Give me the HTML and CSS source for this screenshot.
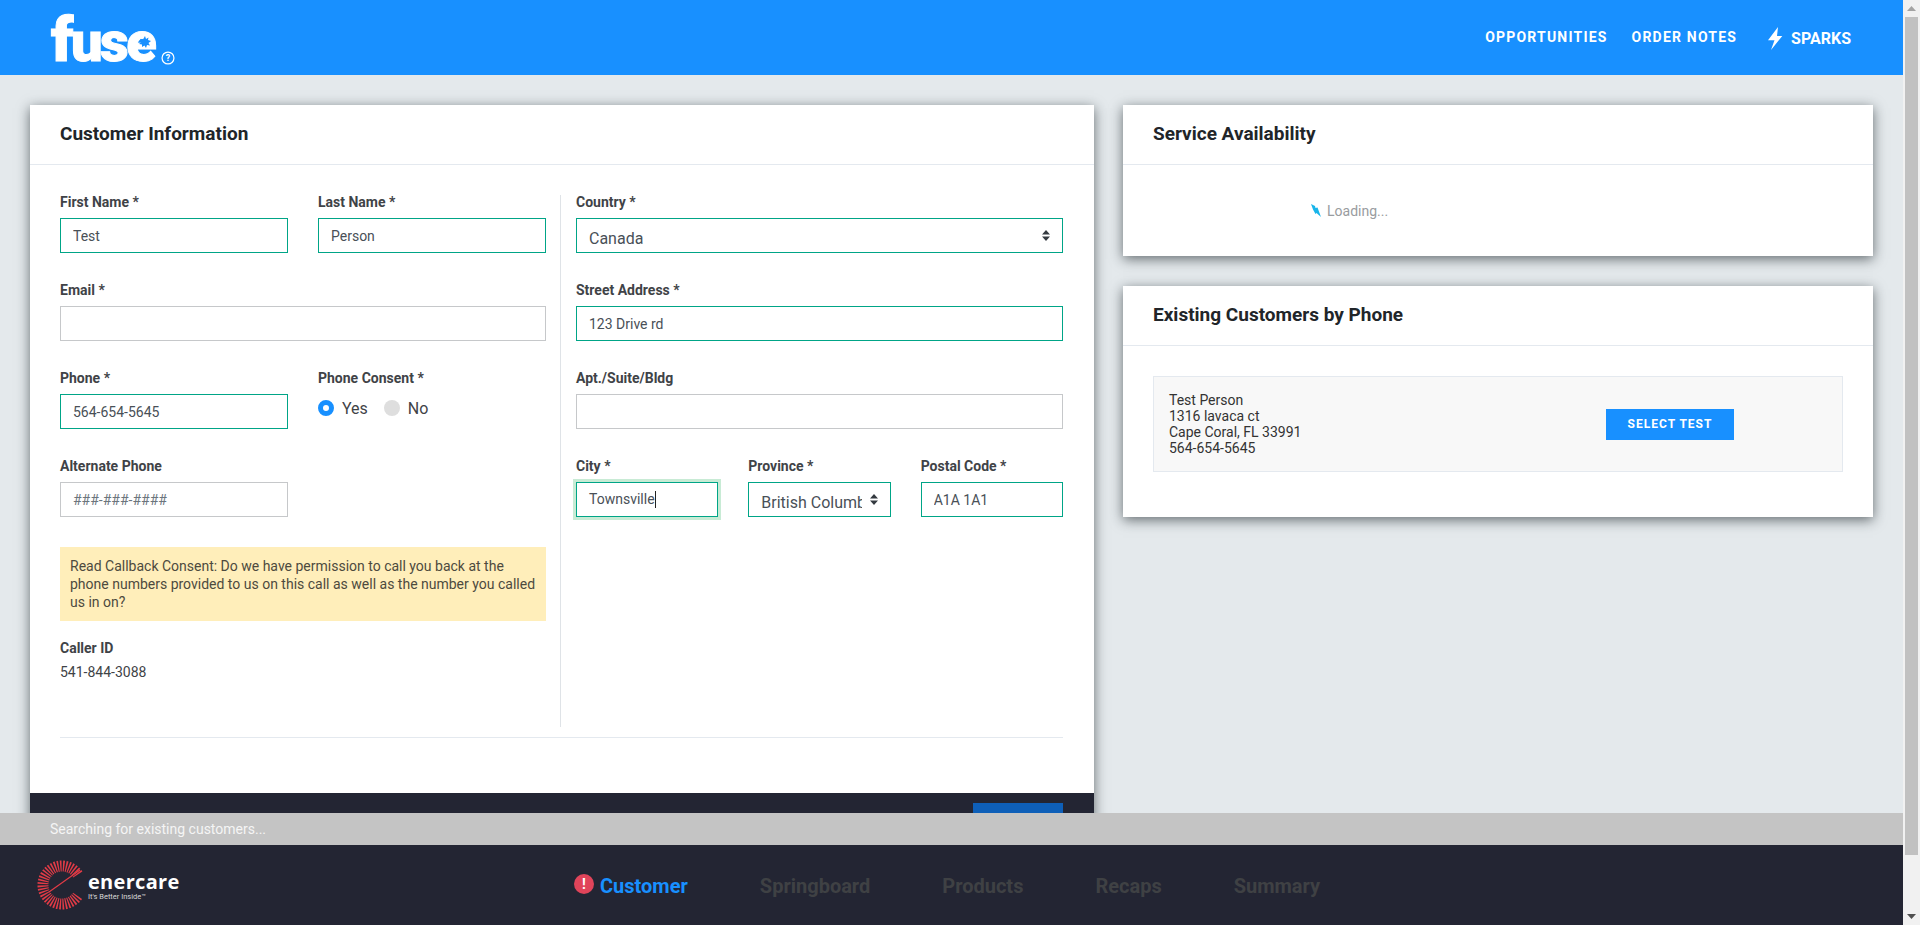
FILE: index.html
```html
<!DOCTYPE html>
<html lang="en">
<head>
  <meta charset="utf-8">
  <title>Fuse - Customer Information</title>
  <link rel="stylesheet" href="styles.css">
</head>
<body>
  <div class="page">
    <div class="page-main">
      <header class="top-bar">
        <div class="logo">
          <span class="logo-word"><span class="logo-f">f</span>use</span>
          <svg class="logo-spark" viewBox="0 0 12 12" width="12" height="12">
            <polygon points="6,0 7,3 9.500,1.500 9,4 12,5 9.500,7 11,9.500 8,9 7,12 5.500,9.500 3,11 3,8.500 0,8 2.500,6 1,3 4,3.500" fill="#1890ff"/>
          </svg>
          <svg class="logo-help" viewBox="0 0 16 16" width="14" height="14">
            <circle cx="8" cy="8" r="6.800" fill="none" stroke="#fff" stroke-width="1.400"/>
            <text x="8" y="11.800" text-anchor="middle" class="logo-help-mark">?</text>
          </svg>
        </div>
        <nav class="top-nav">
          <a class="top-link">OPPORTUNITIES</a>
          <a class="top-link">ORDER NOTES</a>
          <a class="top-link sparks">
            <svg viewBox="0 0 15 23" width="15" height="23"><path d="M10 0 L0 13.300 L6.500 13.300 L3 23 L14.300 9 L9 9 Z" fill="#fff"/></svg>
            <span>SPARKS</span>
          </a>
        </nav>
      </header>

      <main class="content">
        <section class="card card-customer">
          <h2 class="card-title">Customer Information</h2>
          <div class="card-body">
            <div class="form-columns">
              <div class="col-left">
                <div class="row-two">
                  <div class="field">
                    <label>First Name *</label>
                    <input class="input valid" type="text" value="Test">
                  </div>
                  <div class="field">
                    <label>Last Name *</label>
                    <input class="input valid" type="text" value="Person">
                  </div>
                </div>
                <div class="field">
                  <label>Email *</label>
                  <input class="input" type="text">
                </div>
                <div class="row-two">
                  <div class="field">
                    <label>Phone *</label>
                    <input class="input valid" type="text" value="564-654-5645">
                  </div>
                  <div class="field">
                    <label>Phone Consent *</label>
                    <div class="radios">
                      <span class="radio radio-on"></span><span class="radio-text">Yes</span>
                      <span class="radio"></span><span class="radio-text">No</span>
                    </div>
                  </div>
                </div>
                <div class="row-two">
                  <div class="field">
                    <label>Alternate Phone</label>
                    <input class="input" type="text" placeholder="###-###-####">
                  </div>
                </div>
                <div class="consent-note">Read Callback Consent: Do we have permission to call you back at the phone numbers provided to us on this call as well as the number you called us in on?</div>
                <div class="caller">
                  <label>Caller ID</label>
                  <div class="caller-num">541-844-3088</div>
                </div>
              </div>
              <div class="col-right">
                <div class="field">
                  <label>Country *</label>
                  <select class="input select valid"><option>Canada</option></select>
                </div>
                <div class="field">
                  <label>Street Address *</label>
                  <input class="input valid" type="text" value="123 Drive rd">
                </div>
                <div class="field">
                  <label>Apt./Suite/Bldg</label>
                  <input class="input" type="text">
                </div>
                <div class="row-three">
                  <div class="field">
                    <label>City *</label>
                    <div class="input valid focused">Townsville<span class="caret"></span></div>
                  </div>
                  <div class="field">
                    <label>Province *</label>
                    <select class="input select valid"><option>British Columbia</option></select>
                  </div>
                  <div class="field">
                    <label>Postal Code *</label>
                    <input class="input valid" type="text" value="A1A 1A1">
                  </div>
                </div>
              </div>
            </div>
            <hr class="form-rule">
          </div>
          <div class="card-actions"><button class="next-btn"></button></div>
        </section>

        <div class="side">
          <section class="card">
            <h2 class="card-title">Service Availability</h2>
            <div class="loading">
              <svg viewBox="0 0 10 13" width="10" height="13"><path d="M0 0 L4 2 L4.500 4 L6.500 3.500 L10 13 L5.500 9 L4.500 10 L2 5.500 Z" fill="#19b5ea"/></svg>
              <span>Loading...</span>
            </div>
          </section>
          <section class="card">
            <h2 class="card-title">Existing Customers by Phone</h2>
            <div class="card-body-side">
              <div class="match">
                <div class="match-info">Test Person<br>1316 lavaca ct<br>Cape Coral, FL 33991<br>564-654-5645</div>
                <button class="select-btn">SELECT TEST</button>
              </div>
            </div>
          </section>
        </div>
      </main>

      <footer class="bottom">
        <div class="status-bar">Searching for existing customers...</div>
        <div class="steps-bar">
          <div class="brand">
            <svg viewBox="0 0 50 50" width="50" height="50">
              <path d="M41.800 14.500 A19 19 0 1 0 41.800 35.500" fill="none" stroke="#e23b46" stroke-width="11" stroke-dasharray="1.400 1.300"/>
              <line x1="13" y1="32" x2="44" y2="10" stroke="#e23b46" stroke-width="1.200"/>
            </svg>
            <div class="brand-text">
              <span class="brand-name">enercare</span>
              <span class="brand-tag">It's Better Inside™</span>
            </div>
          </div>
          <nav class="steps">
            <span class="step step-active"><span class="step-alert">!</span>Customer</span>
            <span class="step">Springboard</span>
            <span class="step">Products</span>
            <span class="step">Recaps</span>
            <span class="step">Summary</span>
          </nav>
        </div>
      </footer>
    </div>

    <div class="scrollbar">
      <svg class="scroll-arrow" viewBox="0 0 9 5" width="9" height="5"><path d="M4.500 0 L9 5 H0 Z" fill="#a3a3a3"/></svg>
      <div class="scroll-thumb"></div>
      <svg class="scroll-arrow scroll-arrow-down" viewBox="0 0 9 5" width="9" height="5"><path d="M0 0 H9 L4.500 5 Z" fill="#505050"/></svg>
    </div>
  </div>
</body>
</html>
```

FILE: styles.css
```css
html, body {
  margin: 0;
  height: 100%;
  overflow: hidden;
}

body {
  font-family: Roboto, "Liberation Sans", sans-serif;
  font-size: 14px;
  color: #3f4347;
  background: #e4e9ec;
}

.page {
  height: 925px;
  display: flex;
}

.page-main {
  flex: 1;
  min-width: 0;
  position: relative;
  overflow: hidden;
}

.scrollbar {
  width: 17px;
  flex: none;
  background: #f1f1f1;
  position: relative;
}

.scroll-arrow {
  display: block;
  margin: 6px auto 0;
  height: 5px;
}

.scroll-thumb {
  height: 838px;
  margin: 0 2px 0 2px;
  margin-top: 6px;
  background: #c1c1c1;
}

.scroll-arrow-down {
  margin-top: 59px;
}

/* top bar */
.top-bar {
  height: 75px;
  background: #1890ff;
  display: flex;
  justify-content: space-between;
  padding: 0 52px 0 51px;
}

.logo {
  display: flex;
  align-items: flex-end;
  padding-bottom: 10px;
  color: #fff;
  position: relative;
}

.logo-word {
  font-family: Roboto, sans-serif;
  font-weight: 900;
  font-size: 56px;
  line-height: 46px;
  letter-spacing: -2.500px;
  -webkit-text-stroke: 1px #fff;
}

.logo-f {
  font-size: 62px;
  line-height: 46px;
}

.logo-spark {
  position: absolute;
  left: 88px;
  top: 36px;
}

.logo-help {
  margin: 0 0 0 7px;
}

.logo-help-mark {
  font-size: 10px;
  font-weight: 700;
  fill: #fff;
}

.top-nav {
  display: flex;
  align-items: center;
  gap: 24px;
  padding-bottom: 2px;
}

.top-link {
  color: #fff;
  font-size: 14px;
  font-weight: 700;
  letter-spacing: 1.200px;
}

.sparks {
  display: flex;
  align-items: center;
  gap: 8px;
  margin-left: 7px;
  font-size: 16px;
  letter-spacing: 0;
  padding-top: 4px;
}

/* main layout */
.content {
  display: flex;
  align-items: flex-start;
  gap: 29px;
  padding: 30px 30px 0;
}

.card {
  background: #fff;
  box-shadow: 0 3px 12px rgba(30, 40, 45, .65);
}

.card-customer {
  width: 1064px;
  flex: none;
}

.side {
  width: 750px;
  flex: none;
  display: flex;
  flex-direction: column;
  gap: 30px;
}

.card-title {
  margin: 0;
  height: 60px;
  line-height: 58px;
  padding: 0 30px;
  box-sizing: border-box;
  font-size: 19px;
  font-weight: 700;
  color: #212529;
  border-bottom: 1px solid #e4e9ef;
}

.card-body {
  padding: 30px 31px 0 30px;
}

.form-columns {
  display: flex;
}

.col-left {
  width: 486px;
  height: 532px;
  padding-right: 14px;
  border-right: 1px solid #dfe3e7;
  flex: none;
}

.col-right {
  flex: 1;
  padding-left: 15px;
}

.row-two {
  display: grid;
  grid-template-columns: 228px 228px;
  gap: 30px;
}

.row-three {
  display: grid;
  grid-template-columns: 1fr 1fr 1fr;
  gap: 30px;
}

.field {
  margin-bottom: 30px;
}

label {
  display: block;
  font-weight: 700;
  font-size: 14px;
  line-height: 14px;
  margin-bottom: 9px;
  color: #3f4347;
}

.input {
  display: block;
  width: 100%;
  height: 35px;
  box-sizing: border-box;
  border: 1px solid #c6c8ca;
  border-radius: 0;
  background: #fff;
  padding: 0 12px;
  font-family: Roboto, "Liberation Sans", sans-serif;
  font-size: 14px;
  line-height: 33px;
  color: #495057;
  outline: none;
}

.input::placeholder {
  color: #6c757d;
  opacity: 1;
}

.valid {
  border-color: #00a587;
}

.focused {
  box-shadow: 0 0 0 3px #c8ebd5;
}

.caret {
  display: inline-block;
  width: 1px;
  height: 17px;
  background: #222;
  vertical-align: -4px;
}

.select {
  appearance: none;
  font-size: 16px;
  padding-top: 3px;
  padding-right: 28px;
  background-image: url("data:image/svg+xml,%3csvg xmlns='http://www.w3.org/2000/svg' width='8' height='11' viewBox='0 0 8 11'%3e%3cpath fill='%23343a40' d='M4 0 L8 4.500 H0 Z M4 11 L0 6.500 H8 Z'/%3e%3c/svg%3e");
  background-repeat: no-repeat;
  background-position: right 12px center;
}

.radios {
  display: flex;
  align-items: center;
  height: 16px;
  margin-top: 15px;
  font-size: 16px;
}

.radio {
  width: 16px;
  height: 16px;
  border-radius: 50%;
  background: #dedede;
  flex: none;
}

.radio-on {
  box-sizing: border-box;
  background: #fff;
  border: 5px solid #1890ff;
}

.radio-text {
  margin: 0 16px 0 8px;
}

.consent-note {
  background: #ffeeba;
  padding: 10px;
  line-height: 18px;
  color: #4d4a3e;
  height: 74px;
  box-sizing: border-box;
}

.caller {
  margin-top: 20px;
}

.caller-num {
  line-height: 16px;
}

.form-rule {
  border: 0;
  border-top: 1px solid #e4e9ef;
  margin: 10px 0 55px;
}

.card-actions {
  background: #232533;
  height: 80px;
  padding: 10px 31px 0;
  text-align: right;
}

.next-btn {
  width: 90px;
  height: 40px;
  border: 0;
  background: #0e5fb8;
}

/* side cards */
.loading {
  height: 91px;
  display: flex;
  align-items: center;
  gap: 6px;
  padding-left: 188px;
  color: #999ca0;
  font-size: 14px;
}

.card-body-side {
  padding: 30px 30px 45px;
}

.match {
  display: flex;
  align-items: center;
  height: 96px;
  box-sizing: border-box;
  background: #f8f8f8;
  border: 1px solid #e4e9ef;
  padding: 0 15px;
  line-height: 16px;
  color: #333;
}

.match-info {
  width: 437px;
  flex: none;
}

.select-btn {
  width: 128px;
  height: 31px;
  border: 0;
  background: #1890ff;
  color: #fff;
  font-family: Roboto, sans-serif;
  font-size: 12px;
  font-weight: 700;
  letter-spacing: 1px;
}

/* footer */
.bottom {
  position: absolute;
  left: 0;
  right: 0;
  bottom: 0;
}

.status-bar {
  height: 32px;
  line-height: 32px;
  background: #c4c4c4;
  color: #f5f5f5;
  padding-left: 50px;
  font-size: 14px;
}

.steps-bar {
  height: 80px;
  background: #232533;
  position: relative;
  display: flex;
  align-items: center;
  padding-left: 36px;
}

.brand {
  display: flex;
  align-items: center;
  gap: 2px;
  color: #fff;
}

.brand-text {
  display: flex;
  flex-direction: column;
  padding-top: 4px;
}

.brand-name {
  font-family: "Open Sans", sans-serif;
  font-size: 20px;
  line-height: 20px;
  font-weight: 700;
  letter-spacing: .3px;
}

.brand-tag {
  font-size: 7.500px;
  line-height: 10px;
  color: #d8d8d8;
}

.steps {
  position: absolute;
  left: 574px;
  top: 27px;
  display: flex;
  font-size: 20px;
  line-height: 28px;
  font-weight: 700;
  color: #3f4144;
}

.step {
  margin-right: 72px;
}

.step-active {
  color: #1890ff;
  display: flex;
  align-items: center;
}

.step-alert {
  width: 20px;
  height: 20px;
  border-radius: 50%;
  background: #e0445a;
  color: #fff;
  font-size: 14px;
  line-height: 20px;
  text-align: center;
  margin: -4px 6px 0 0;
}
```
